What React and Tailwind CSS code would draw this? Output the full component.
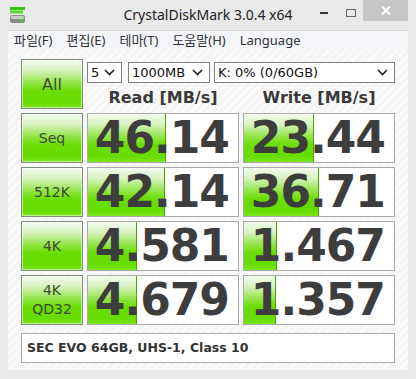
const rows = [
  { label: ["Seq"], read: "46.14", rb: 78, write: "23.44", wb: 70 },
  { label: ["512K"], read: "42.14", rb: 77, write: "36.71", wb: 75 },
  { label: ["4K"], read: "4.581", rb: 49, write: "1.467", wb: 33 },
  { label: ["4K", "QD32"], read: "4.679", rb: 49, write: "1.357", wb: 32 },
];

const green =
  "bg-[linear-gradient(to_bottom,#f4faf0_0%,#d8f2c0_22%,#9ae656_44%,#6bdd04_64%,#66dc00_88%,#7be51c_100%)]";

const Chevron = () => (
  <svg width="11" height="7" viewBox="0 0 11 7" className="shrink-0">
    <path d="M1 1 L5.5 5.5 L10 1" fill="none" stroke="#222" strokeWidth="1.6" />
  </svg>
);

const Select = ({ text, w, className = "" }) => (
  <div
    className={`h-[21px] ${w} flex items-center justify-between pl-[3px] pr-[6px] bg-white border border-[#7f7f7f] text-[13px] text-[#111] ${className}`}
  >
    <span className="leading-none">{text}</span>
    <Chevron />
  </div>
);

const GreenButton = ({ children }) => (
  <div
    className={`w-[62px] h-[50px] shrink-0 border border-[#7f8c78] ${green} flex flex-col items-center justify-center text-[#3e4a34] leading-[19px] text-[14px] shadow-[inset_0_0_0_1px_rgba(255,255,255,0.5)]`}
  >
    {children}
  </div>
);

const Cell = ({ value, bar }) => (
  <div className="relative w-[152px] h-[50px] bg-white border border-[#a9a9a9] overflow-hidden">
    <div
      className={`absolute left-0 top-0 bottom-0 ${green} border-r border-[#48a800]`}
      style={{ width: bar }}
    />
    <div className="relative h-full flex items-center justify-end pr-[9px] text-[44px] font-bold text-[#3d3d3d] tracking-[-1px] leading-none">
      {value}
    </div>
  </div>
);

export default function App() {
  return (
    <div className="w-[416px] h-[379px] bg-[#e9e9e9] flex flex-col font-['DejaVu_Sans','Noto_Sans_CJK_KR',sans-serif] overflow-hidden">
      {/* title bar */}
      <div className="h-[30px] relative flex items-center shrink-0">
        <svg width="18" height="18" viewBox="0 0 18 18" className="absolute left-[9px] top-[7px]">
          <rect x="1" y="0" width="15" height="3" fill="#39c21a" />
          <rect x="1" y="3.5" width="13" height="3" fill="#5ad82c" />
          <rect x="1" y="8" width="15" height="8" rx="2" fill="#8a8e8a" />
          <rect x="2" y="9" width="13" height="3" rx="1" fill="#c9ccc9" />
          <rect x="11" y="12.5" width="3" height="2" fill="#49d12a" />
        </svg>
        <div className="absolute left-0 right-0 top-[4px] text-center text-[14px] text-[#222] font-['Noto_Sans',sans-serif]">
          CrystalDiskMark 3.0.4 x64
        </div>
        <div className="absolute left-[320px] top-[12px] w-[8px] h-[2px] bg-[#333]" />
        <div className="absolute left-[346px] top-[9px] w-[10px] h-[8px] border border-[#666]" />
        <div className="absolute left-[363px] top-0 w-[45px] h-[21px] bg-[#c6c6c6] flex items-center justify-center">
          <svg width="10" height="9" viewBox="0 0 10 9">
            <path d="M1 0.5 L9 8.5 M9 0.5 L1 8.5" stroke="#fff" strokeWidth="2" />
          </svg>
        </div>
      </div>

      {/* menu bar */}
      <div className="mx-[8px] h-[20px] shrink-0 bg-[#f3f5f8] border-t border-[#d8dadd] flex items-center text-[13px] text-[#333] font-['Noto_Sans','Noto_Sans_CJK_KR',sans-serif]">
        <span className="pl-[6px] pr-[7px]">파일(F)</span>
        <span className="px-[7px]">편집(E)</span>
        <span className="px-[7px]">테마(T)</span>
        <span className="px-[7px]">도움말(H)</span>
        <span className="px-[7px]">Language</span>
      </div>

      {/* main panel */}
      <div className="mx-[8px] h-[320px] shrink-0 bg-[repeating-linear-gradient(135deg,#f5f5f5_0px,#f5f5f5_4px,#fbfbfb_4px,#fbfbfb_6px)] pl-[13px] pt-[9px] flex flex-col gap-[4px]">
        <div className="flex gap-[4px] h-[50px]">
          <GreenButton>
            <span className="text-[16px]">All</span>
          </GreenButton>
          <div className="flex flex-col h-[50px]">
            <div className="flex mt-[3px]">
              <Select text="5" w="w-[35px]" />
              <Select text="1000MB" w="w-[82px]" className="ml-[6px]" />
              <Select text="K: 0% (0/60GB)" w="w-[181px]" className="ml-[4px]" />
            </div>
            <div className="flex gap-[4px] mt-[4px] h-[22px] items-center text-[16px] leading-[22px] font-bold text-[#3a3a3a]">
              <div className="w-[152px] text-center">Read [MB/s]</div>
              <div className="w-[152px] text-center">Write [MB/s]</div>
            </div>
          </div>
        </div>

        {rows.map((r) => (
          <div key={r.read} className="flex gap-[4px]">
            <GreenButton>
              {r.label.map((l) => (
                <span key={l}>{l}</span>
              ))}
            </GreenButton>
            <Cell value={r.read} bar={r.rb} />
            <Cell value={r.write} bar={r.wb} />
          </div>
        ))}

        <div className="mt-[4px] w-[374px] h-[30px] bg-white border border-[#a9a9a9] flex items-center pl-[5px] text-[12.5px] font-bold text-[#333]">
          SEC EVO 64GB, UHS-1, Class 10
        </div>
      </div>
    </div>
  );
}
